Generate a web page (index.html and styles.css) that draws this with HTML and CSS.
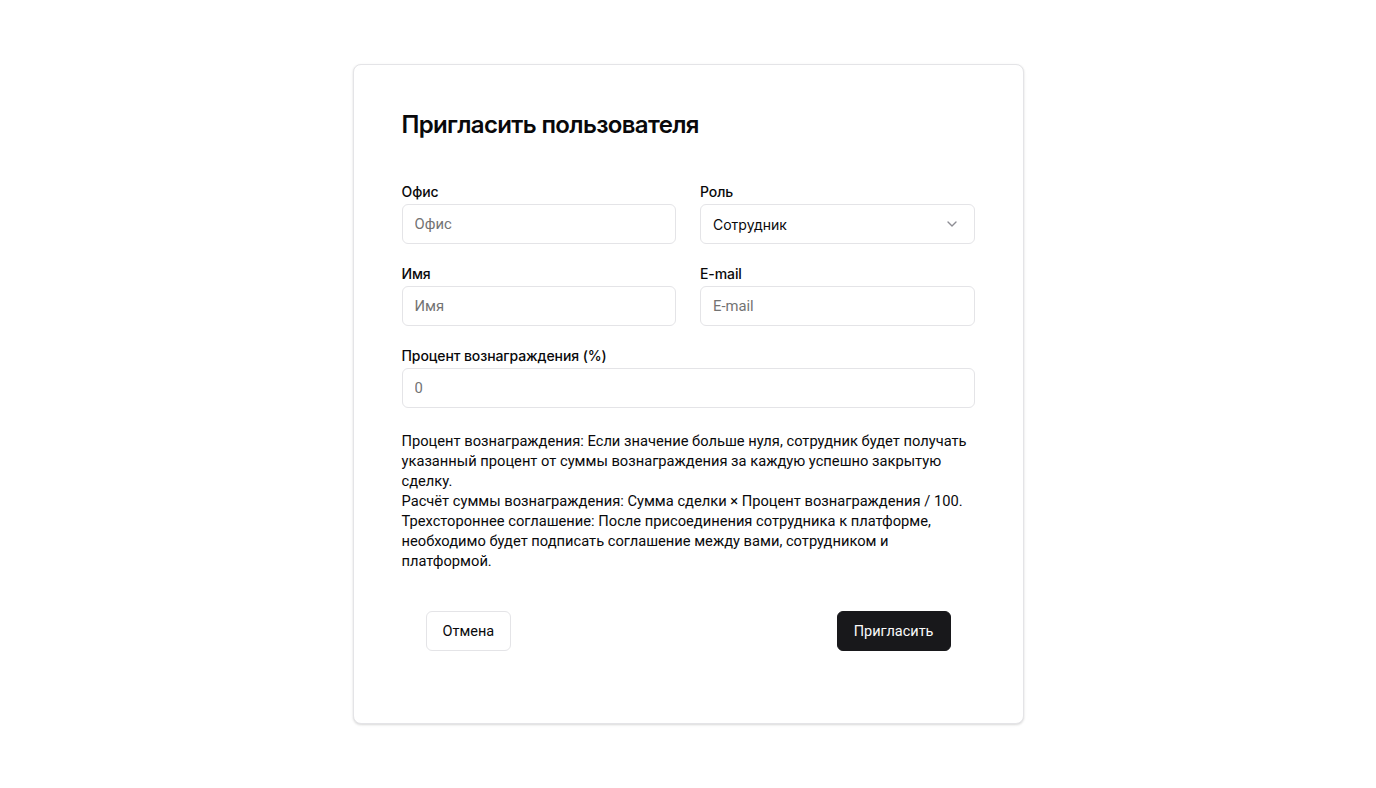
FILE: index.html
```html
<!DOCTYPE html>
<html lang="ru">
<head>
<meta charset="utf-8">
<title>Пригласить пользователя</title>
<link rel="stylesheet" href="styles.css">
</head>
<body>
<main class="page">
  <section class="card">
    <h2 class="title">Пригласить пользователя</h2>
    <form class="form">
      <div class="grid">
        <div class="field">
          <label class="label">Офис</label>
          <input class="input" type="text" placeholder="Офис">
        </div>
        <div class="field">
          <label class="label">Роль</label>
          <div class="select">
            <span class="select-value">Сотрудник</span>
            <svg class="chevron" width="16" height="16" viewBox="0 0 24 24" fill="none" stroke="currentColor" stroke-width="2" stroke-linecap="round" stroke-linejoin="round"><path d="m6 9 6 6 6-6"/></svg>
          </div>
        </div>
        <div class="field">
          <label class="label">Имя</label>
          <input class="input" type="text" placeholder="Имя">
        </div>
        <div class="field">
          <label class="label">E-mail</label>
          <input class="input" type="text" placeholder="E-mail">
        </div>
        <div class="field wide">
          <label class="label">Процент вознаграждения (%)</label>
          <input class="input" type="text" placeholder="0">
        </div>
      </div>
      <div class="desc">
        <p>Процент вознаграждения: Если значение больше нуля, сотрудник будет получать указанный процент от суммы вознаграждения за каждую успешно закрытую сделку.</p>
        <p>Расчёт суммы вознаграждения: Сумма сделки × Процент вознаграждения / 100.</p>
        <p>Трехстороннее соглашение: После присоединения сотрудника к платформе, необходимо будет подписать соглашение между вами, сотрудником и платформой.</p>
      </div>
      <div class="footer">
        <button type="button" class="btn btn-outline">Отмена</button>
        <button type="button" class="btn btn-primary">Пригласить</button>
      </div>
    </form>
  </section>
</main>
</body>
</html>
```

FILE: styles.css
```css
* { box-sizing: border-box; }
html, body { margin: 0; padding: 0; background: #ffffff; }
body { font-family: Inter, "Noto Sans", sans-serif; color: #09090b; }

.page {
  min-height: 788px;
  display: flex;
  align-items: center;
  justify-content: center;
}

.card {
  width: 671px;
  background: #fff;
  border: 1px solid #e4e4e7;
  border-radius: 8px;
  box-shadow: 0 1px 3px rgba(0,0,0,0.10), 0 1px 2px rgba(0,0,0,0.06);
  padding: 48px;
}

.title {
  margin: 0 0 45px;
  font-size: 24px;
  line-height: 24px;
  font-weight: 600;
  letter-spacing: -0.65px;
}

.form { margin: 0; }

.grid {
  display: grid;
  grid-template-columns: 1fr 1fr;
  column-gap: 24px;
  row-gap: 20px;
}

.field { display: flex; flex-direction: column; gap: 2px; }
.field.wide { grid-column: 1 / 3; }

.label {
  font-size: 14px;
  line-height: 20px;
  font-weight: 500;
  letter-spacing: -0.1px;
  color: #09090b;
}

.input, .select {
  height: 40px;
  width: 100%;
  border: 1px solid #e4e4e7;
  border-radius: 6px;
  padding: 0 12px;
  font-family: Roboto, sans-serif;
  font-size: 14.8px;
  color: #09090b;
  background: #fff;
  outline: none;
}
.input::placeholder { color: #737373; }

.select {
  display: flex;
  align-items: center;
  justify-content: space-between;
  font-family: Inter, sans-serif;
  font-size: 14px;
  padding-right: 14px;
}
.chevron { color: #71717a; opacity: 0.8; }

.desc {
  margin-top: 23px;
  font-family: Roboto, sans-serif;
  font-size: 14.7px;
  line-height: 20px;
  color: #09090b;
}
.desc p { margin: 0; }

.footer {
  margin-top: 40px;
  padding: 0 24px 24px;
  display: flex;
  justify-content: space-between;
}

.btn {
  height: 40px;
  padding: 0 16px;
  border-radius: 6px;
  font-family: Roboto, sans-serif;
  font-size: 14.5px;
  font-weight: 400;
  cursor: pointer;
}
.btn-outline {
  background: #fff;
  border: 1px solid #e4e4e7;
  color: #09090b;
}
.btn-primary {
  background: #18181b;
  border: 1px solid #18181b;
  color: #fafafa;
}
```
